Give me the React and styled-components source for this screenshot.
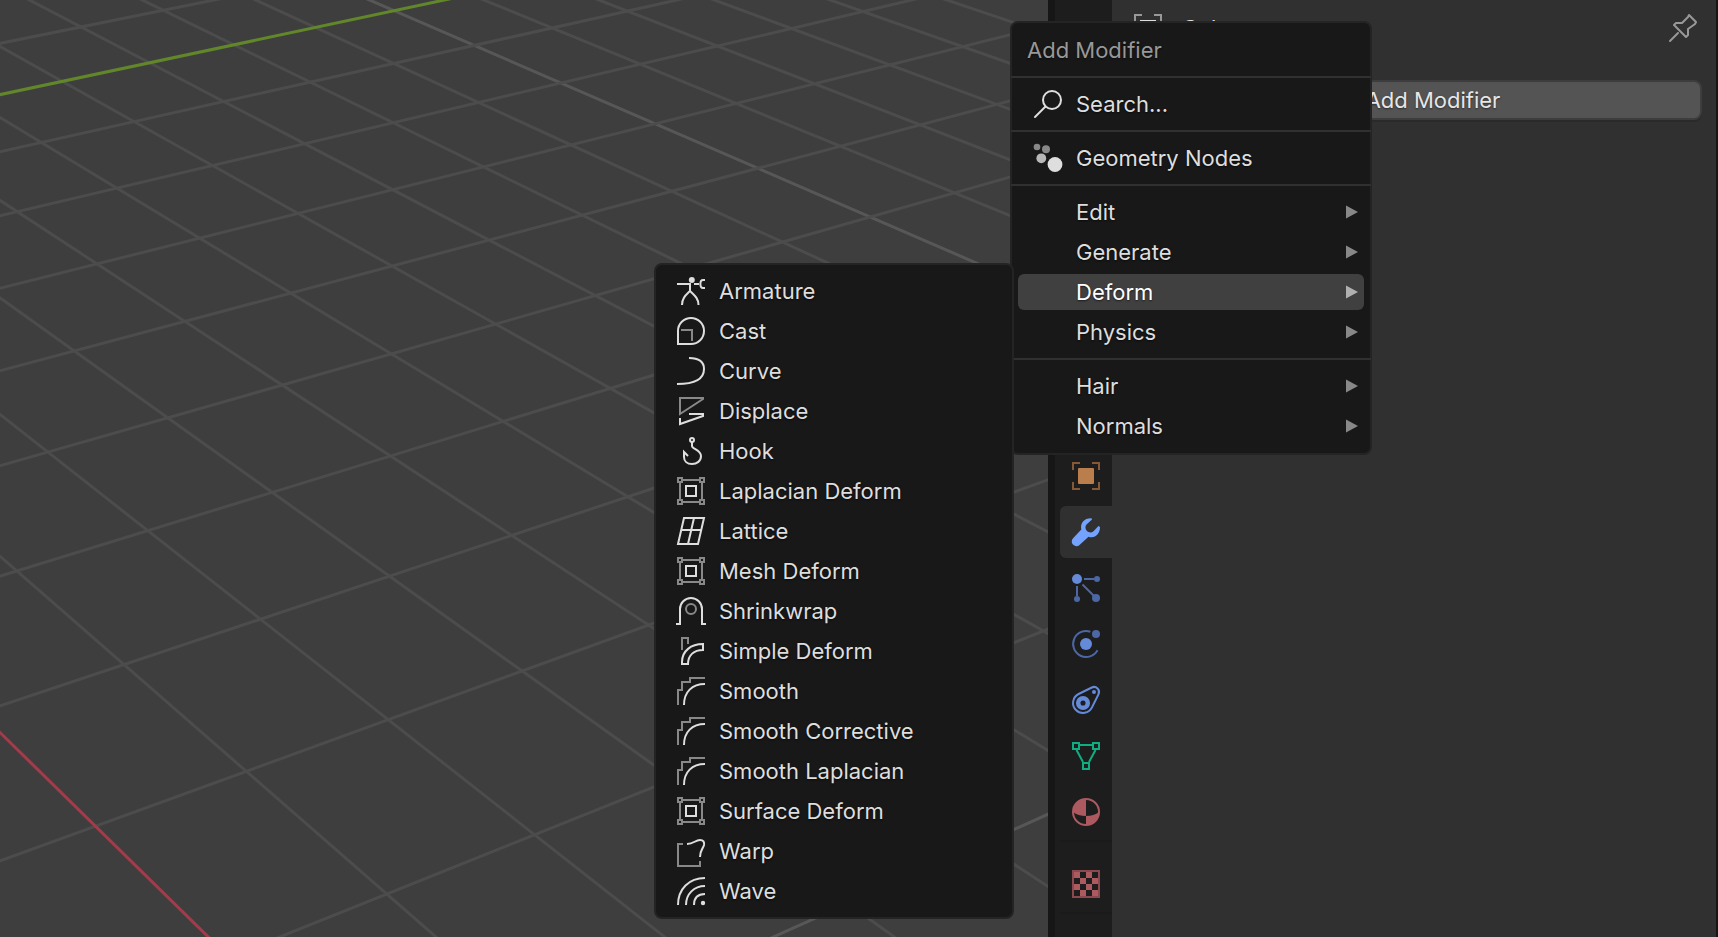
import React from "react";
import styled, { createGlobalStyle, css } from "styled-components";

const GlobalStyle = createGlobalStyle`
  * {
    box-sizing: border-box;
  }
  body {
    margin: 0;
    background: #161616;
    color: #dedede;
    font-family: Inter, sans-serif;
    font-size: 22px;
    line-height: 28px;
  }
  button {
    border: 0;
    padding: 0;
    background: none;
    color: inherit;
    font: inherit;
    text-shadow: inherit;
    cursor: default;
  }
`;

const Editor = styled.div`
  position: relative;
  display: flex;
  min-height: 100vh;
  overflow: hidden;
`;

const Viewport = styled.main`
  flex: 1;
  min-width: 0;
  position: relative;
  background: #3e3e3e;
`;

const GridCanvas = styled.svg`
  position: absolute;
  inset: 0;
  width: 100%;
  height: 100%;
`;

const Properties = styled.aside`
  display: flex;
  flex: 0 0 670px;
  padding: 0 2px 0 7px;
  background: #161616;
`;

const TabBar = styled.nav`
  display: flex;
  flex-direction: column;
  flex: 0 0 57px;
  gap: 16px;
  padding: 450px 0 0 5px;
  background: #1d1d1d;
`;

const TabGroup = styled.div`
  display: flex;
  flex-direction: column;
  gap: 4px;
  padding-bottom: 2px;
  border-bottom: 2px solid #1a1a1a;
`;

const Tab = styled.button`
  display: flex;
  align-items: center;
  height: 52px;
  padding-left: 12px;
  border-radius: 6px 0 0 6px;
  background: ${(props) => (props.$active ? "#303030" : "transparent")};
`;

const Panel = styled.section`
  flex: 1;
  padding: 8px 14px;
  background: #303030;
`;

const PanelHeader = styled.header`
  display: flex;
  align-items: center;
  gap: 20px;
  height: 40px;
  padding: 0 5px 0 8px;
  margin-bottom: 32px;
`;

const ObjectName = styled.span`
  flex: 1;
`;

const PinButton = styled.button`
  display: flex;
`;

const AddButton = styled.button`
  width: 100%;
  height: 40px;
  padding-left: 38px;
  border: 2px solid #3d3d3d;
  border-radius: 8px;
  background: #545454;
  color: #e6e6e6;
  text-shadow: 0 1px 2px rgba(0, 0, 0, 0.5);
  box-shadow: 0 2px 0 rgba(0, 0, 0, 0.12);
`;

const Menu = styled.div`
  position: absolute;
  display: flex;
  flex-direction: column;
  border: 2px solid #242424;
  border-radius: 8px;
  background: #181818;
  text-shadow: 0 1px 2px rgba(0, 0, 0, 0.6);
`;

const ModifierMenu = styled(Menu)`
  top: 21px;
  right: 346px;
  width: 362px;
  padding: 7px 6px;
`;

const DeformMenu = styled(Menu)`
  top: 263px;
  right: 704px;
  width: 360px;
  padding: 6px 6px 6px 5px;
`;

const MenuTitle = styled.div`
  height: 40px;
  padding: 6px 9px;
  color: #989898;
`;

const Separator = styled.hr`
  width: auto;
  height: 2px;
  margin: 6px -7px;
  border: 0;
  background: #303030;
`;

const MenuItem = styled.button`
  display: flex;
  align-items: center;
  gap: 14px;
  height: 36px;
  margin: 2px 0;
  padding: 0 6px 0 16px;
  border-radius: 6px;
  text-align: left;

  ${(props) =>
    props.$active &&
    css`
      background: #404040;
      color: #ffffff;
    `}
`;

const Label = styled.span`
  flex: 1;
`;

const Icon = styled.svg`
  flex: none;
  width: 28px;
  height: 28px;
  overflow: visible;
  fill: none;
  stroke: ${(props) => props.$color || "#dedede"};
  stroke-width: 2;

  .dim {
    stroke: #888888;
  }
  .fill {
    fill: ${(props) => props.$color || "#dedede"};
    stroke: none;
  }
`;

const Arrow = styled.svg`
  flex: none;
  width: 12px;
  height: 14px;
  fill: ${(props) => (props.$active ? "#b0b0b0" : "#888888")};
`;

// Floor plane: a 6x6 block of cells seen in perspective
const GRID_QUAD = [
  [17.3, 211.7],
  [561, 83],
  [1281, 395],
  [648.6, 625],
];

function project(i, j) {
  const [[x0, y0], [x1, y1], [x2, y2], [x3, y3]] = GRID_QUAD;
  const u = (i - 4) / 6;
  const v = (j - 2) / 6;
  const dx1 = x1 - x2;
  const dx2 = x3 - x2;
  const dx3 = x0 - x1 + x2 - x3;
  const dy1 = y1 - y2;
  const dy2 = y3 - y2;
  const dy3 = y0 - y1 + y2 - y3;
  const det = dx1 * dy2 - dx2 * dy1;
  const g = (dx3 * dy2 - dx2 * dy3) / det;
  const h = (dx1 * dy3 - dx3 * dy1) / det;
  const w = g * u + h * v + 1;
  return [
    ((x1 - x0 + g * x1) * u + (x3 - x0 + h * x3) * v + x0) / w,
    ((y1 - y0 + g * y1) * u + (y3 - y0 + h * y3) * v + y0) / w,
  ];
}

const range = (from, to) =>
  Array.from({ length: to - from + 1 }, (_, k) => from + k);

function GridLine({ from, to, color, width = 3 }) {
  const [x1, y1] = project(...from);
  const [x2, y2] = project(...to);
  return (
    <line x1={x1} y1={y1} x2={x2} y2={y2} stroke={color} strokeWidth={width} />
  );
}

function FloorGrid() {
  const shade = (n) => (n % 10 === 0 ? "#575757" : "#4c4c4c");
  return (
    <GridCanvas viewBox="0 0 1048 937" preserveAspectRatio="xMinYMin slice">
      {range(1, 24).map((i) => (
        <GridLine key={`x${i}`} from={[i, -8]} to={[i, 14]} color={shade(i)} />
      ))}
      {[-2, -1, ...range(1, 13)].map((j) => (
        <GridLine key={`y${j}`} from={[-2, j]} to={[26, j]} color={shade(j)} />
      ))}
      <GridLine from={[-2, 0]} to={[26, 0]} color="#62872a" />
      <GridLine from={[0, -8]} to={[0, 14]} color="#a33b4b" />
    </GridCanvas>
  );
}

const meshDeform = (
  <>
    <path
      className="dim"
      d="M1 1h4v4h-4zM23 1h4v4h-4zM1 23h4v4h-4zM23 23h4v4h-4zM6 3H22M6 25H22M3 6V22M25 6V22"
    />
    <path d="M9 9h10v10h-10z" />
  </>
);

const smooth = (
  <>
    <path className="dim" d="M1 28V13H5V5H13V1H28" />
    <path d="M7 28C7 15 15 7 28 7" />
  </>
);

const icons = {
  search: (
    <>
      <circle cx="18" cy="10" r="9" />
      <path d="M11.5 16.5L1 27" strokeLinecap="round" />
    </>
  ),
  nodes: (
    <>
      <circle cx="3" cy="3" r="3.3" fill="#888888" stroke="none" />
      <circle cx="12" cy="5.3" r="4" fill="#888888" stroke="none" />
      <circle cx="7.3" cy="14.3" r="4.9" fill="#b8b8b8" stroke="none" />
      <circle cx="21" cy="20.5" r="7.4" className="fill" />
    </>
  ),
  armature: (
    <>
      <circle cx="14.8" cy="3" r="3" className="fill" />
      <path d="M0 7H13V14M17 7H22M13 14C9 18 5 21 5 28M13 14C17 18 21.5 21 21.5 28M28 3H26C22.5 3 22.5 11 26 11H28" />
    </>
  ),
  cast: (
    <>
      <path d="M1 27V14A13 13 0 1 1 14 27Z" />
      <path className="dim" d="M4 13H15V24" />
    </>
  ),
  curve: <path d="M12 1C21 1 27 4 27 12C27 22 17 27 0 27" />,
  displace: (
    <>
      <path className="dim" d="M3 17V1H26V2Z" />
      <path d="M12 17H26V19L3 27V21" />
    </>
  ),
  hook: (
    <>
      <circle cx="15" cy="3" r="2" />
      <path d="M15 5V9C15 12 24 13 24 19C24 24 20 27 15 27C10 27 7 24 7 20V15L11 19" />
    </>
  ),
  meshDeform,
  lattice: <path d="M7 1H27L21 27H1ZM17 1L11 27M4 13H24" />,
  shrinkwrap: (
    <>
      <path d="M-1 27H3V12A11 11 0 0 1 25 12V27H29" />
      <circle className="dim" cx="14" cy="12" r="5" />
    </>
  ),
  simpleDeform: (
    <>
      <path className="dim" d="M5 13V1H11V7" />
      <path d="M5 27V25C5 14 14 7 26 7V13C17 13 11 18 11 27Z" />
    </>
  ),
  smooth,
  warp: (
    <>
      <path className="dim" d="M6 7H1V29H23V24" />
      <path d="M10 7C17 7 18 3 23 3C26.5 3 27.5 5 27 8C26 12 23 13 23 20" />
    </>
  ),
  wave: (
    <>
      <path d="M1 28C1 12 12 1 28 1M9 28C9 17 17 9 28 9M17 28C17 21 21 17 28 17" />
      <circle cx="26" cy="26" r="2.2" className="fill" />
    </>
  ),
  pin: (
    <path
      d="M1 27L9 19M20 1L27 8L26 10L19 15V21L17 23L5 11L7 9H13L19 3Z"
      strokeLinecap="round"
      strokeLinejoin="round"
    />
  ),
  objectData: (
    <>
      <path d="M1 8V1H8M20 1H27V8M27 20V27H20M8 27H1V20" />
      <path d="M7 7H21V21H7Z" stroke="#dedede" />
    </>
  ),
  object: (
    <>
      <path stroke="#855837" d="M1 8V1H8M20 1H27V8M27 20V27H20M8 27H1V20" />
      <rect x="6" y="6" width="16" height="16" rx="1" className="fill" />
    </>
  ),
  wrench: (
    <path
      className="fill"
      d="M19.5 0.2C12 0 8 5 9.3 11.5L1.3 20A4.5 4.5 0 0 0 7.5 27L16.5 18.8C23 21 28 16 28 9L26.5 8L21.5 13.2C19.5 15 17 14.8 15 13C13 11 13 8.5 14.5 6.5L20 1.5Z"
    />
  ),
  particles: (
    <>
      <g stroke="#4c67a3">
        <path d="M12 5H22M5 12V22M10.5 10.5L22 22" />
        <g fill="#4c67a3" stroke="none">
          <circle cx="25" cy="5" r="3" />
          <circle cx="5" cy="25" r="3" />
          <circle cx="24" cy="24" r="4" />
        </g>
      </g>
      <circle cx="5" cy="5" r="5" className="fill" />
    </>
  ),
  physics: (
    <>
      <path stroke="#4c67a3" d="M18.3 1.7A13 13 0 1 0 25.5 20.3" />
      <circle cx="24" cy="4" r="4" fill="#4c67a3" stroke="none" />
      <circle cx="14" cy="14" r="6" className="fill" />
    </>
  ),
  constraints: (
    <>
      <path d="M6.6 8L19.8 1.5A5 5 0 0 1 26.5 8.2L20 21.4A10 10 0 1 1 6.6 8Z" />
      <circle cx="11" cy="17" r="4.8" strokeWidth="4.5" />
      <circle cx="22" cy="6" r="2" className="fill" />
    </>
  ),
  data: (
    <path d="M1 1h6v6h-6zM21 1h6v6h-6zM11 21h6v6h-6zM8 3H20M4.5 8L11 20M23.5 8L17 20" />
  ),
  material: (
    <>
      <circle cx="14" cy="14" r="13" />
      <path
        className="fill"
        d="M14 1A13 13 0 0 0 1 14Q6 18 14 18ZM14 18Q22 18 27 14A13 13 0 0 1 14 27Z"
      />
    </>
  ),
  texture: (
    <>
      <rect x="1" y="1" width="26" height="26" stroke="#8b484e" />
      <path
        className="fill"
        d={range(0, 15)
          .filter((n) => (n + Math.floor(n / 4)) % 2 === 0)
          .map((n) => `M${2 + (n % 4) * 6} ${2 + Math.floor(n / 4) * 6}h6v6h-6z`)
          .join("")}
      />
    </>
  ),
};

const tabGroups = [
  [
    { name: "Object", icon: "object", color: "#ba7e4c" },
    { name: "Modifiers", icon: "wrench", color: "#74a2ff", active: true },
    { name: "Particles", icon: "particles", color: "#648ad8" },
    { name: "Physics", icon: "physics", color: "#648ad8" },
    { name: "Constraints", icon: "constraints", color: "#648ad8" },
    { name: "Data", icon: "data", color: "#10ad82" },
    { name: "Material", icon: "material", color: "#ad5960" },
  ],
  [{ name: "Texture", icon: "texture", color: "#ad5960" }],
];

const deformItems = [
  ["Armature", "armature"],
  ["Cast", "cast"],
  ["Curve", "curve"],
  ["Displace", "displace"],
  ["Hook", "hook"],
  ["Laplacian Deform", "meshDeform"],
  ["Lattice", "lattice"],
  ["Mesh Deform", "meshDeform"],
  ["Shrinkwrap", "shrinkwrap"],
  ["Simple Deform", "simpleDeform"],
  ["Smooth", "smooth"],
  ["Smooth Corrective", "smooth"],
  ["Smooth Laplacian", "smooth"],
  ["Surface Deform", "meshDeform"],
  ["Warp", "warp"],
  ["Wave", "wave"],
];

function Glyph({ name, color }) {
  return (
    <Icon viewBox="0 0 28 28" $color={color} aria-hidden="true">
      {icons[name]}
    </Icon>
  );
}

function Item({ label, icon, submenu, active }) {
  return (
    <MenuItem type="button" role="menuitem" $active={active}>
      <Glyph name={icon} />
      <Label>{label}</Label>
      {submenu && (
        <Arrow viewBox="0 0 12 14" $active={active} aria-hidden="true">
          <path d="M0 0.5L12 7L0 13.5Z" />
        </Arrow>
      )}
    </MenuItem>
  );
}

function App() {
  return (
    <Editor>
      <GlobalStyle />
      <Viewport>
        <FloorGrid />
      </Viewport>
      <Properties>
        <TabBar>
          {tabGroups.map((tabs) => (
            <TabGroup key={tabs[0].name}>
              {tabs.map((tab) => (
                <Tab
                  key={tab.name}
                  type="button"
                  aria-label={tab.name}
                  $active={tab.active}
                >
                  <Glyph name={tab.icon} color={tab.color} />
                </Tab>
              ))}
            </TabGroup>
          ))}
        </TabBar>
        <Panel>
          <PanelHeader>
            <Glyph name="objectData" color="#989898" />
            <ObjectName>Cube</ObjectName>
            <PinButton type="button" aria-label="Pin">
              <Glyph name="pin" color="#989898" />
            </PinButton>
          </PanelHeader>
          <AddButton type="button">Add Modifier</AddButton>
        </Panel>
      </Properties>

      <ModifierMenu role="menu" aria-label="Add Modifier">
        <MenuTitle>Add Modifier</MenuTitle>
        <Separator />
        <Item label="Search..." icon="search" />
        <Separator />
        <Item label="Geometry Nodes" icon="nodes" />
        <Separator />
        <Item label="Edit" submenu />
        <Item label="Generate" submenu />
        <Item label="Deform" submenu active />
        <Item label="Physics" submenu />
        <Separator />
        <Item label="Hair" submenu />
        <Item label="Normals" submenu />
      </ModifierMenu>

      <DeformMenu role="menu" aria-label="Deform">
        {deformItems.map(([label, icon]) => (
          <Item key={label} label={label} icon={icon} />
        ))}
      </DeformMenu>
    </Editor>
  );
}

export default App;
